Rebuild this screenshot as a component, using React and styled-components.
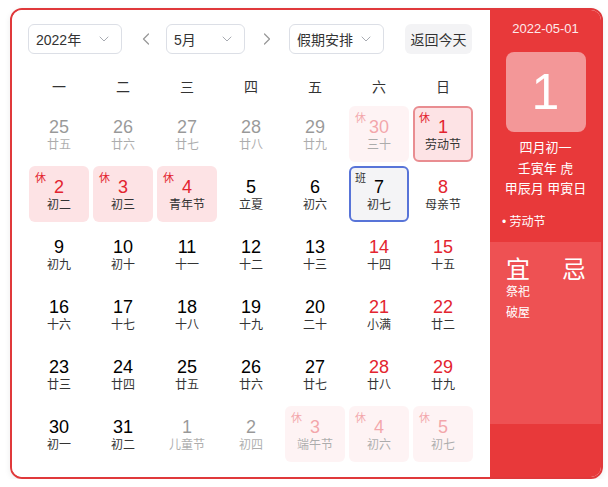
import styled, { createGlobalStyle } from "styled-components";
import { ChevronDown, ChevronLeft, ChevronRight } from "lucide-react";

const RED = "#e8393a";

const GlobalStyle = createGlobalStyle`
  body {
    margin: 0;
    background: #fff;
    font-family: "Liberation Sans", "Noto Sans CJK SC", sans-serif;
  }
`;

const Page = styled.div`
  padding: 8px 0 0 10px;
`;

const Card = styled.div`
  display: flex;
  width: 593px;
  height: 471px;
  box-sizing: border-box;
  border: 2px solid #e0393b;
  border-radius: 12px;
  overflow: hidden;
  box-shadow: 0 2px 6px rgba(0, 0, 0, 0.08);
`;

const Main = styled.div`
  flex: 1;
  padding: 14px 17px 0 16px;
  background: #fff;
`;

const Toolbar = styled.div`
  display: flex;
  align-items: center;
  height: 30px;
`;

const Select = styled.div`
  display: flex;
  align-items: center;
  justify-content: space-between;
  box-sizing: border-box;
  width: ${(p) => p.$w}px;
  height: 30px;
  padding: 0 9px 0 7px;
  border: 1px solid #dcdfe6;
  border-radius: 6px;
  font-size: 14px;
  color: #333;
  svg {
    color: #a8abb2;
  }
`;

const Arrow = styled.div`
  display: flex;
  align-items: center;
  justify-content: center;
  width: 44px;
  padding-left: ${(p) => (p.$prev ? 4 : 0)}px;
  box-sizing: border-box;
  color: #999;
`;

const TodayBtn = styled.div`
  display: flex;
  align-items: center;
  justify-content: center;
  width: 67px;
  height: 30px;
  margin-left: 21px;
  border-radius: 6px;
  background: #f3f3f5;
  font-size: 14px;
  color: #333;
`;

const WeekRow = styled.div`
  display: grid;
  grid-template-columns: repeat(7, 60px);
  gap: 4px;
  margin: 23px 0 0 1px;
  height: 20px;
  line-height: 20px;
  font-size: 14px;
  color: #333;
  text-align: center;
`;

const Grid = styled.div`
  display: grid;
  grid-template-columns: repeat(7, 60px);
  grid-auto-rows: 56px;
  gap: 4px;
  margin: 9px 0 0 1px;
`;

const Cell = styled.div`
  position: relative;
  box-sizing: border-box;
  display: flex;
  flex-direction: column;
  align-items: center;
  padding-top: 9px;
  border-radius: 6px;
  border: 2px solid
    ${(p) => (p.$today ? "#5874d8" : p.$selected ? "#e98d91" : "transparent")};
  background: ${(p) =>
    p.$kind === "rest" ? "#fde3e5" : p.$kind === "work" ? "#f4f4f6" : "transparent"};
  opacity: ${(p) => (p.$outside ? 0.4 : 1)};
`;

const Num = styled.div`
  font-size: 18px;
  line-height: 20px;
  color: ${(p) => (p.$red ? "#e3242f" : "#000")};
`;

const Lunar = styled.div`
  font-size: 12px;
  line-height: 16px;
  color: #333;
`;

const Tag = styled.span`
  position: absolute;
  top: 3px;
  left: 4px;
  font-size: 11px;
  line-height: 14px;
  color: ${(p) => (p.$kind === "rest" ? "#e3242f" : "#333")};
`;

const Side = styled.div`
  width: 111px;
  display: flex;
  flex-direction: column;
  color: #fff;
`;

const SideTop = styled.div`
  height: 232px;
  box-sizing: border-box;
  padding-top: 10px;
  background: ${RED};
  display: flex;
  flex-direction: column;
  align-items: center;
`;

const DateText = styled.div`
  font-size: 13px;
  line-height: 18px;
  color: #fdeaea;
`;

const BigDay = styled.div`
  width: 80px;
  height: 80px;
  margin-top: 14px;
  border-radius: 8px;
  background: #f39798;
  display: flex;
  align-items: center;
  justify-content: center;
  font-size: 50px;
  color: #fff;
`;

const Info = styled.div`
  margin-top: 6px;
  font-size: 13px;
  line-height: 20.5px;
  text-align: center;
`;

const Festival = styled.div`
  align-self: stretch;
  margin-top: 12px;
  padding-left: 12px;
  font-size: 12px;
  line-height: 20px;
`;

const SideMid = styled.div`
  height: 182px;
  box-sizing: border-box;
  padding: 16px 15px 0 16px;
  background: #ee5153;
`;

const YiJi = styled.div`
  display: flex;
  justify-content: space-between;
  font-size: 24px;
  line-height: 24px;
`;

const Item = styled.div`
  font-size: 12px;
  line-height: 21px;
`;

const SideBottom = styled.div`
  flex: 1;
  background: ${RED};
`;

const weekdays = ["一", "二", "三", "四", "五", "六", "日"];

// [day, lunar, options]
const days = [
  [25, "廿五", { outside: 1 }], [26, "廿六", { outside: 1 }], [27, "廿七", { outside: 1 }],
  [28, "廿八", { outside: 1 }], [29, "廿九", { outside: 1 }],
  [30, "三十", { outside: 1, kind: "rest", red: 1 }],
  [1, "劳动节", { kind: "rest", red: 1, selected: 1 }],
  [2, "初二", { kind: "rest", red: 1 }], [3, "初三", { kind: "rest", red: 1 }],
  [4, "青年节", { kind: "rest", red: 1 }], [5, "立夏"], [6, "初六"],
  [7, "初七", { kind: "work", today: 1 }], [8, "母亲节", { red: 1 }],
  [9, "初九"], [10, "初十"], [11, "十一"], [12, "十二"], [13, "十三"],
  [14, "十四", { red: 1 }], [15, "十五", { red: 1 }],
  [16, "十六"], [17, "十七"], [18, "十八"], [19, "十九"], [20, "二十"],
  [21, "小满", { red: 1 }], [22, "廿二", { red: 1 }],
  [23, "廿三"], [24, "廿四"], [25, "廿五"], [26, "廿六"], [27, "廿七"],
  [28, "廿八", { red: 1 }], [29, "廿九", { red: 1 }],
  [30, "初一"], [31, "初二"], [1, "儿童节", { outside: 1 }], [2, "初四", { outside: 1 }],
  [3, "端午节", { outside: 1, kind: "rest", red: 1 }],
  [4, "初六", { outside: 1, kind: "rest", red: 1 }],
  [5, "初七", { outside: 1, kind: "rest", red: 1 }],
];

export default function App() {
  return (
    <Page>
      <GlobalStyle />
      <Card>
        <Main>
          <Toolbar>
            <Select $w={94}>
              2022年
              <ChevronDown size={16} strokeWidth={1.5} />
            </Select>
            <Arrow $prev>
              <ChevronLeft size={20} strokeWidth={1.5} />
            </Arrow>
            <Select $w={79}>
              5月
              <ChevronDown size={16} strokeWidth={1.5} />
            </Select>
            <Arrow>
              <ChevronRight size={20} strokeWidth={1.5} />
            </Arrow>
            <Select $w={95}>
              假期安排
              <ChevronDown size={16} strokeWidth={1.5} />
            </Select>
            <TodayBtn>返回今天</TodayBtn>
          </Toolbar>
          <WeekRow>
            {weekdays.map((w) => (
              <div key={w}>{w}</div>
            ))}
          </WeekRow>
          <Grid>
            {days.map(([d, lunar, o = {}], i) => (
              <Cell
                key={i}
                $kind={o.kind}
                $outside={o.outside}
                $selected={o.selected}
                $today={o.today}
              >
                {o.kind && <Tag $kind={o.kind}>{o.kind === "rest" ? "休" : "班"}</Tag>}
                <Num $red={o.red}>{d}</Num>
                <Lunar>{lunar}</Lunar>
              </Cell>
            ))}
          </Grid>
        </Main>
        <Side>
          <SideTop>
            <DateText>2022-05-01</DateText>
            <BigDay>1</BigDay>
            <Info>
              <div>四月初一</div>
              <div>壬寅年 虎</div>
              <div>甲辰月 甲寅日</div>
            </Info>
            <Festival>• 劳动节</Festival>
          </SideTop>
          <SideMid>
            <YiJi>
              <span>宜</span>
              <span>忌</span>
            </YiJi>
            <Item>祭祀</Item>
            <Item>破屋</Item>
          </SideMid>
          <SideBottom />
        </Side>
      </Card>
    </Page>
  );
}
